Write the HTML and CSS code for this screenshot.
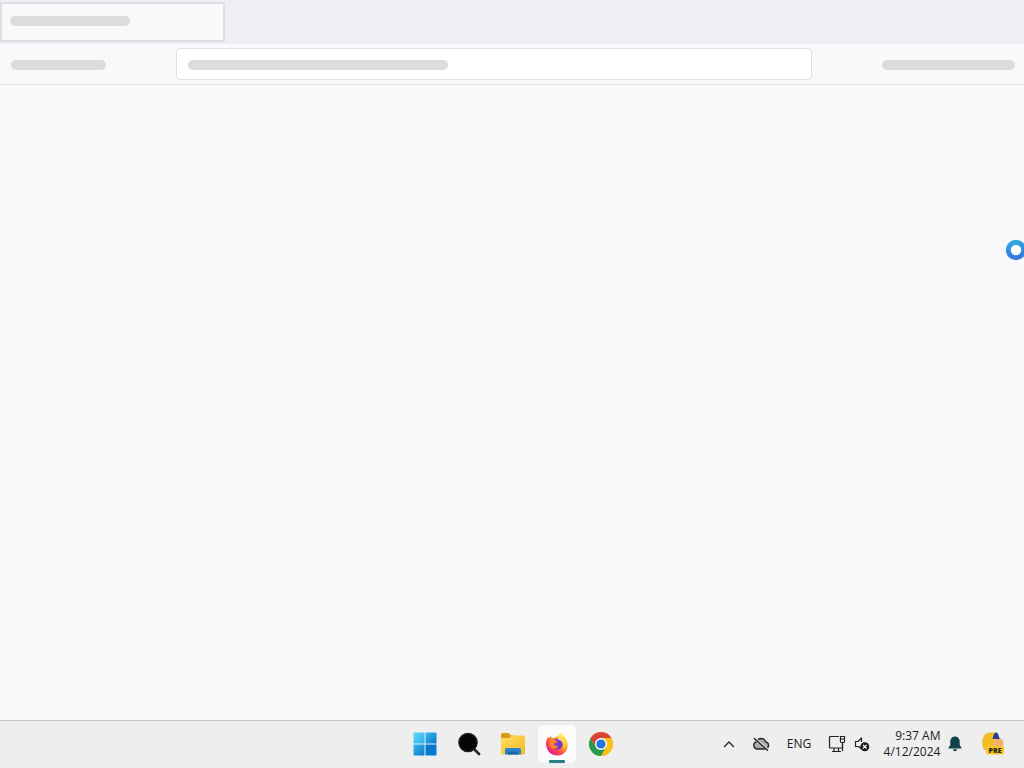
FILE: index.html
```html
<!DOCTYPE html>
<html lang="en">
<head>
<meta charset="utf-8">
<title>Desktop</title>
<link rel="stylesheet" href="styles.css">
</head>
<body>
<div class="screen">
  <header class="tabs">
    <div class="tab"><span class="bar bar-title"></span></div>
  </header>
  <div class="toolbar">
    <span class="bar bar-nav"></span>
    <div class="address"><span class="bar bar-url"></span></div>
    <span class="bar bar-actions"></span>
  </div>
  <main class="content">
    <svg class="busy" width="22" height="22" viewBox="0 0 22 22" aria-hidden="true">
      <defs><linearGradient id="ring" x1="0" y1="0" x2=".3" y2="1"><stop offset="0" stop-color="#2fa9e2"/><stop offset="1" stop-color="#347ddd"/></linearGradient></defs>
      <circle cx="11" cy="11" r="7.7" fill="#fff" stroke="url(#ring)" stroke-width="5"/>
    </svg>
  </main>
  <footer class="taskbar">
    <nav class="apps" aria-label="Apps">
      <button class="app" aria-label="Start">
        <svg width="24" height="24" viewBox="0 0 24 24">
          <defs>
            <linearGradient id="w1" x1="0" y1="0" x2="1" y2="1"><stop offset="0" stop-color="#62d8f8"/><stop offset="1" stop-color="#27b0ea"/></linearGradient>
            <linearGradient id="w2" x1="0" y1="0" x2="1" y2="1"><stop offset="0" stop-color="#36bbec"/><stop offset="1" stop-color="#0878cf"/></linearGradient>
          </defs>
          <path fill="url(#w1)" d="M1.500.5H11.500V11.500H.5V1.500Q.5.5 1.500.5z"/>
          <path fill="url(#w2)" d="M12.500.5H22.500Q23.500.5 23.500 1.500V11.500H12.500z"/>
          <path fill="url(#w2)" d="M.5 12.500H11.500V23.500H1.500Q.5 23.500.5 22.500z"/>
          <path fill="#0877ce" d="M12.500 12.500H23.500V22.500Q23.500 23.500 22.500 23.500H12.500z"/>
        </svg>
      </button>
      <button class="app" aria-label="Search">
        <svg width="24" height="24" viewBox="0 0 24 24">
          <path d="M17 17l5 5" stroke="#292929" stroke-width="2.800" stroke-linecap="round"/>
          <circle cx="11" cy="10.500" r="9.200" fill="#050505" stroke="#222" stroke-width="1.200"/>
        </svg>
      </button>
      <button class="app" aria-label="File Explorer">
        <svg width="26" height="24" viewBox="0 0 26 24">
          <defs><linearGradient id="fold" x1="0" y1="0" x2="1" y2="1"><stop offset="0" stop-color="#ffdc63"/><stop offset="1" stop-color="#f3bb22"/></linearGradient></defs>
          <path fill="#d99a10" d="M1 7V2.500Q1 1 2.500 1H8.500L11 3.500H14V8H1z"/>
          <path fill="url(#fold)" d="M1 6H9L12 3.500H23.500Q25 3.500 25 5V21Q25 22.500 23.500 22.500H2.500Q1 22.500 1 21z"/>
          <path fill="#2a83cf" d="M5 22.500V17.500Q5 16 6.500 16H19.500Q21 16 21 17.500V22.500z"/>
          <path fill="#1a64a8" d="M8 19.500H18V22.500H8z"/>
        </svg>
      </button>
      <button class="app app-active" aria-label="Firefox">
        <svg width="24" height="24" viewBox="0 0 24 24">
          <defs>
            <linearGradient id="fx" x1=".85" y1=".1" x2=".2" y2=".9"><stop offset="0" stop-color="#fff04b"/><stop offset=".35" stop-color="#ffab28"/><stop offset=".7" stop-color="#ff4352"/><stop offset="1" stop-color="#e52381"/></linearGradient>
            <linearGradient id="fp" x1="0" y1="0" x2="1" y2="1"><stop offset="0" stop-color="#a34be7"/><stop offset="1" stop-color="#5b32bf"/></linearGradient>
            <linearGradient id="fy" x1="0" y1="0" x2="0" y2="1"><stop offset="0" stop-color="#fff36a"/><stop offset="1" stop-color="#ffb12a"/></linearGradient>
          </defs>
          <path fill="url(#fx)" d="M1 11.500C1 8.500 2 6.500 3.400 4.800L3.700 6.200 6.200 3.700 6.500 6.200Q8 5.200 10 5.500L13.300 3.700Q14.500 1.800 16.200.5C16.800 3 20 4.500 21.500 7.500C24.500 14 22 23.500 12 23.500C5.500 23.500 1 18 1 11.500z"/>
          <circle cx="12" cy="12" r="5.600" fill="url(#fp)"/>
          <path fill="#ff8524" d="M5 7C7.500 6 9 7.500 11 8.700L12.200 9.700Q11.500 11.200 9.200 11.500C8.500 13.500 10.500 14.500 13.500 14C12 17.500 6.500 18 5 14C4 11.500 4 8.500 5 7z"/>
          <path fill="url(#fy)" d="M13.300 3.700Q14.500 1.800 16.200.5C16.500 3.500 20.500 5 21.300 10.500C21.800 14 20 17 17.500 18.500C20 13.500 18 9.500 13.300 7.500Q12.500 5.500 13.300 3.700z"/>
        </svg>
      </button>
      <button class="app" aria-label="Chrome">
        <svg width="26" height="26" viewBox="0 0 26 26">
          <circle cx="13" cy="13" r="12" fill="#fbc116"/>
          <path fill="#dc4437" d="M2.600 7A12 12 0 0 1 23.400 7H13L7.800 16z"/>
          <path fill="#249b50" d="M2.600 7A12 12 0 0 0 13 25L18.200 16H7.800z"/>
          <path fill="#fbc116" d="M23.400 7H13L18.200 16 13 25A12 12 0 0 0 23.400 7z"/>
          <circle cx="13" cy="13" r="6" fill="#fff"/>
          <circle cx="13" cy="13" r="4.600" fill="#2476df"/>
        </svg>
      </button>
    </nav>
    <div class="tray">
      <button class="tray-item" aria-label="Show hidden icons">
        <svg width="14" height="14" viewBox="0 0 14 14" fill="none" stroke="#252525" stroke-width="1.400" stroke-linecap="round" stroke-linejoin="round"><path d="M2.500 9.500L7 5 11.500 9.500"/></svg>
      </button>
      <button class="tray-item" aria-label="Cloud storage offline">
        <svg width="18" height="16" viewBox="0 0 18 16">
          <path fill="#aaa" stroke="#222" stroke-width="1.300" d="M5 13A3.700 3.700 0 0 1 4.300 5.800Q5.800 2.500 9.200 2.500Q12.700 2.500 13.700 5.800A3.650 3.650 0 0 1 13.300 13z"/>
          <path d="M3.300 3L15.700 13.800" stroke="#ddd" stroke-width="2.600"/>
          <path d="M2.300 2.500L15.500 14.300" stroke="#222" stroke-width="1.400" stroke-linecap="round"/>
        </svg>
      </button>
      <button class="tray-item language">ENG</button>
      <button class="tray-item status" aria-label="Network and sound">
        <svg width="18" height="18" viewBox="0 0 18 18" fill="none" stroke="#222" stroke-width="1.200">
          <path d="M11 1.500H2.500Q1.500 1.500 1.500 2.500V12Q1.500 13 2.500 13H14.500V8.500M6 13V16M10.500 13V16M4 16.500H13"/>
          <path d="M12.500 1.500H16.500V6.500Q16.500 7.500 15.500 7.500H13.500Q12.500 7.500 12.500 6.500zM12.500 4H16.500M14.500 8V16"/>
        </svg>
        <svg width="16" height="16" viewBox="0 0 16 16">
          <path d="M7.500 13L4.500 10.500H1.500V5.500H4L7.500 2V6" fill="none" stroke="#222" stroke-width="1.200" stroke-linejoin="round"/>
          <circle cx="10.800" cy="10.700" r="4.500" fill="#1d1d1d"/>
          <path d="M9 8.900l3.600 3.600M12.600 8.900L9 12.500" stroke="#fff" stroke-width="1.200"/>
        </svg>
      </button>
      <button class="tray-item clock">
        <span class="time">9:37 AM<br>4/12/2024</span>
        <svg width="14" height="16" viewBox="0 0 14 16"><path fill="#12404b" d="M7 .5C9.800.5 11.700 2.700 11.700 5.500V9L13.500 11.700V12.500H.5V11.700L2.300 9V5.500C2.300 2.700 4.200.5 7 .5zM4.800 13.300H9.200Q8.800 15.300 7 15.300Q5.200 15.300 4.800 13.300z"/></svg>
      </button>
      <button class="tray-item copilot" aria-label="Copilot preview">
        <svg width="24" height="26" viewBox="0 0 24 26">
          <path fill="#f1bd24" d="M9.500 1.500H16L11.500 16Q10.500 20 8 20H6Q1.500 19.500 1.200 12.500Q1.200 1.500 9.500 1.500z"/>
          <path fill="#f5b16a" d="M14 7H17Q22.500 7 22.500 12.500Q22.500 16 20.500 18H10.500z"/>
          <path fill="#234193" d="M11.500 8L12.700 4Q13.300 1.500 15 1.500Q17 1.500 17.500 4L18.700 8z"/>
          <rect x="5" y="15" width="18" height="8.500" rx="2" fill="#f7c626"/>
          <text class="pre" x="14" y="22" text-anchor="middle">PRE</text>
        </svg>
      </button>
    </div>
  </footer>
</div>
</body>
</html>
```
FILE: styles.css
```css
* { box-sizing: border-box; }

body {
  margin: 0;
  background: #f9f9fb;
  color: #1c1c1c;
  font-family: "Open Sans", "Noto Sans", sans-serif;
  font-size: 12px;
}

button {
  border: 0;
  padding: 0;
  background: none;
  color: inherit;
  font: inherit;
}

svg { display: block; flex: none; }

.screen {
  display: flex;
  flex-direction: column;
  min-height: 100vh;
}

.tabs {
  display: flex;
  height: 44px;
  padding: 2px 0;
  background: #eeeef3;
}

.tab {
  width: 225px;
  padding: 12px 8px;
  background: #f9f9fb;
  border: 2px solid #dfdfe2;
}

.bar {
  display: block;
  height: 10px;
  border-radius: 5px;
  background: #dcdcdd;
}

.toolbar .bar { margin-top: 2px; }

.bar-title { width: 120px; }
.bar-nav { width: 95px; margin-left: 11px; }
.bar-url { width: 260px; }
.bar-actions { width: 133px; margin-right: 9px; justify-self: end; }

.toolbar {
  display: grid;
  grid-template-columns: 176px 1fr 212px;
  align-items: center;
  height: 41px;
  border-bottom: 1px solid #e2e2e5;
}

.address {
  display: flex;
  align-items: center;
  height: 32px;
  padding: 0 11px;
  background: #fff;
  border: 1px solid #e0e0e3;
  border-radius: 4px;
}

.content {
  flex: 1;
  position: relative;
  overflow: hidden;
}

.busy {
  position: absolute;
  top: 154px;
  right: -3px;
}

.taskbar {
  display: grid;
  grid-template-columns: 1fr auto 1fr;
  align-items: center;
  height: 48px;
  padding-bottom: 2px;
  background: #eee;
  border-top: 1px solid #c3c3c6;
}

.apps {
  grid-column: 2;
  display: flex;
  gap: 6px;
  margin-left: 2px;
}

.app {
  display: grid;
  place-items: center;
  position: relative;
  width: 38px;
  height: 38px;
  border-radius: 4px;
}

.app-active {
  background: #fbfbfb;
  box-shadow: 0 0 1px #ccc;
}

.app-active::after {
  content: "";
  position: absolute;
  bottom: 0;
  left: 11px;
  width: 16px;
  height: 3px;
  border-radius: 1px;
  background: #278080;
}

.tray {
  display: flex;
  justify-content: flex-end;
  align-items: center;
  padding-right: 19px;
}

.tray-item {
  display: flex;
  align-items: center;
  justify-content: center;
  width: 32px;
  height: 40px;
}

.language { width: 44px; }
.status { width: 56px; gap: 8px; }
.clock { width: 92px; gap: 8px; }

.time {
  text-align: right;
  line-height: 16px;
  white-space: nowrap;
}

.copilot { width: 24px; margin-left: 12px; }

.pre {
  font-family: "Open Sans", sans-serif;
  font-size: 7px;
  font-weight: 800;
  fill: #222;
}
```
